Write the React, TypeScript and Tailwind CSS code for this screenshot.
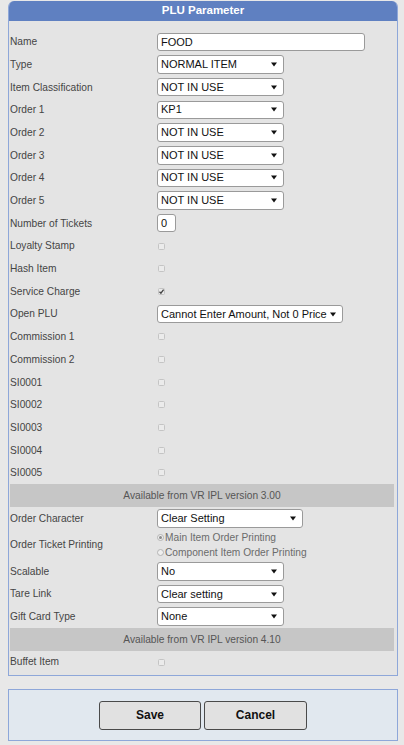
import React from 'react';

function Arrow() {
  return (
    <svg width="6" height="5" viewBox="0 0 6 5" className="shrink-0">
      <path d="M0 0.5H6L3 4.5Z" fill="#111" />
    </svg>
  );
}

function Select({ value, w = 'w-[127px]' }: { value: string; w?: string }) {
  return (
    <div
      className={`flex h-[18.5px] items-center justify-between rounded-[3px] border border-[#9a9a9a] bg-white pl-[3px] pr-[6px] text-[11px] leading-none text-[#111] ${w}`}
    >
      <span className="whitespace-nowrap">{value}</span>
      <Arrow />
    </div>
  );
}

function Check({ checked = false }: { checked?: boolean }) {
  return (
    <div className="relative ml-[0.5px] h-[7px] w-[7px] rounded-[1.5px] border border-[#c4c4c4] bg-[#ebebeb]">
      {checked && (
        <svg width="7" height="7" viewBox="0 0 7 7" className="absolute left-[-1px] top-[-1px]">
          <path d="M1.5 3.8L2.9 5.2L5.6 1.6" stroke="#444" strokeWidth="1.3" fill="none" />
        </svg>
      )}
    </div>
  );
}

function Row({
  label,
  children,
  h = 'h-[22.7px]',
}: {
  label: string;
  children?: React.ReactNode;
  h?: string;
}) {
  return (
    <div className={`flex items-center ${h}`}>
      <div className="w-[147px] shrink-0 text-[10.2px] text-[#454545]">{label}</div>
      <div className="flex items-center">{children}</div>
    </div>
  );
}

function Bar({ text }: { text: string }) {
  return (
    <div className="flex h-[22.7px] items-center justify-center bg-[#c6c6c6] text-[10.2px] text-[#555]">
      {text}
    </div>
  );
}

function Radio({ on, label }: { on?: boolean; label: string }) {
  return (
    <div className="flex h-[15px] items-center text-[10.2px] text-[#6b6b6b]">
      <div className="mr-[1px] flex h-[7px] w-[7px] items-center justify-center rounded-full border border-[#b4b4b4] bg-[#efefef]">
        {on && <div className="h-[3px] w-[3px] rounded-full bg-[#8a8a8a]" />}
      </div>
      <span>{label}</span>
    </div>
  );
}

export default function App() {
  return (
    <div className="min-h-screen bg-[#e8e8e8] pt-[1px] font-['Liberation_Sans',Arial,sans-serif]">
      <div className="ml-[8px] w-[390px]">
        <div className="overflow-hidden rounded-t-[6px] border-x border-b border-[#8ea7d9] bg-[#e4e4e4]">
          <div className="flex h-[20px] items-center justify-center bg-[#5f80c1] text-[11.5px] font-bold text-white">
            PLU Parameter
          </div>
          <div className="pb-[1.5px] pl-[1px] pr-[3px] pt-[9.5px]">
            <Row label="Name">
              <div className="flex h-[18px] w-[208px] items-center rounded-[3px] border border-[#9a9a9a] bg-white pl-[3px] text-[11px] text-[#111]">
                FOOD
              </div>
            </Row>
            <Row label="Type">
              <Select value="NORMAL ITEM" />
            </Row>
            <Row label="Item Classification">
              <Select value="NOT IN USE" />
            </Row>
            <Row label="Order 1">
              <Select value="KP1" />
            </Row>
            <Row label="Order 2">
              <Select value="NOT IN USE" />
            </Row>
            <Row label="Order 3">
              <Select value="NOT IN USE" />
            </Row>
            <Row label="Order 4">
              <Select value="NOT IN USE" />
            </Row>
            <Row label="Order 5">
              <Select value="NOT IN USE" />
            </Row>
            <Row label="Number of Tickets">
              <div className="flex h-[18px] w-[18.5px] items-center rounded-[3px] border border-[#9a9a9a] bg-white pl-[3px] text-[11px] text-[#111]">
                0
              </div>
            </Row>
            <Row label="Loyalty Stamp">
              <Check />
            </Row>
            <Row label="Hash Item">
              <Check />
            </Row>
            <Row label="Service Charge">
              <Check checked />
            </Row>
            <Row label="Open PLU">
              <Select value="Cannot Enter Amount, Not 0 Price" w="w-[185.5px]" />
            </Row>
            <Row label="Commission 1">
              <Check />
            </Row>
            <Row label="Commission 2">
              <Check />
            </Row>
            <Row label="SI0001">
              <Check />
            </Row>
            <Row label="SI0002">
              <Check />
            </Row>
            <Row label="SI0003">
              <Check />
            </Row>
            <Row label="SI0004">
              <Check />
            </Row>
            <Row label="SI0005">
              <Check />
            </Row>
            <Bar text="Available from VR IPL version 3.00" />
            <Row label="Order Character">
              <Select value="Clear Setting" w="w-[146px]" />
            </Row>
            <Row label="Order Ticket Printing" h="h-[30.4px]">
              <div className="flex flex-col">
                <Radio on label="Main Item Order Printing" />
                <Radio label="Component Item Order Printing" />
              </div>
            </Row>
            <Row label="Scalable">
              <Select value="No" />
            </Row>
            <Row label="Tare Link">
              <Select value="Clear setting" />
            </Row>
            <Row label="Gift Card Type">
              <Select value="None" />
            </Row>
            <Bar text="Available from VR IPL version 4.10" />
            <Row label="Buffet Item">
              <Check />
            </Row>
          </div>
        </div>

        <div className="mt-[13px] flex h-[52px] items-center justify-center gap-[3px] border border-[#8ea7d9] bg-[#e1e8ef] pt-[1px]">
          <button className="h-[29px] w-[102px] rounded-[3px] border border-[#4a4a4a] bg-[#e1e1e1] text-[12px] font-bold text-[#111]">
            Save
          </button>
          <button className="h-[29px] w-[103px] rounded-[3px] border border-[#4a4a4a] bg-[#e1e1e1] text-[12px] font-bold text-[#111]">
            Cancel
          </button>
        </div>
      </div>
    </div>
  );
}
